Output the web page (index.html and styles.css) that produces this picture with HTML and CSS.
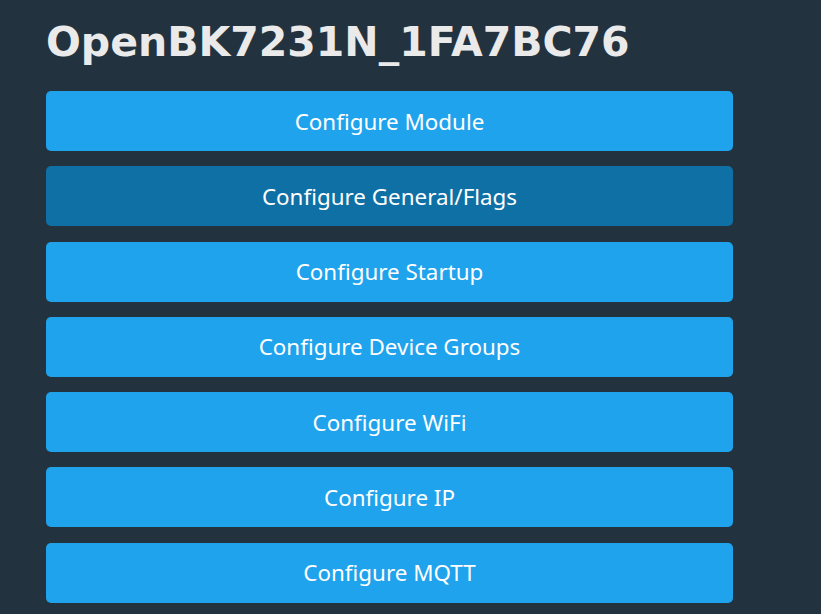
FILE: index.html
```html
<!DOCTYPE html>
<html lang="en">
<head>
    <meta charset="UTF-8">
    <meta name="viewport" content="width=device-width, initial-scale=1.0">
    <link rel="stylesheet" href="styles.css">
</head>
<body>
    <div class="main">
        <h1 class="device-name">OpenBK7231N_1FA7BC76</h1>
        <div class="menu">
            <button class="btn">Configure Module</button>
            <button class="btn hover">Configure General/Flags</button>
            <button class="btn">Configure Startup</button>
            <button class="btn">Configure Device Groups</button>
            <button class="btn">Configure WiFi</button>
            <button class="btn">Configure IP</button>
            <button class="btn">Configure MQTT</button>
        </div>
    </div>
</body>
</html>
```

FILE: styles.css
```css
body, html {
    margin: 0;
    padding: 0;
    background: #22323f;
    color: #eaeaea;
    overflow: hidden;
}

.main {
    width: 687px;
    padding-left: 46px;
}

.device-name {
    font-family: 'DejaVu Sans', Verdana, sans-serif;
    font-weight: 700;
    font-size: 41px;
    line-height: 48px;
    margin: 0;
    padding: 18px 0 25px;
}

.menu {
    display: flex;
    flex-direction: column;
    gap: 15.3px;
}

.btn {
    display: block;
    width: 100%;
    height: 60px;
    border: 0;
    border-radius: 5px;
    background: #1fa3ec;
    color: #ffffff;
    font-family: 'Noto Sans', 'Open Sans', sans-serif;
    font-size: 22.4px;
    cursor: pointer;
}

.btn.hover,
.btn:hover {
    background: #0e70a4;
}
```
